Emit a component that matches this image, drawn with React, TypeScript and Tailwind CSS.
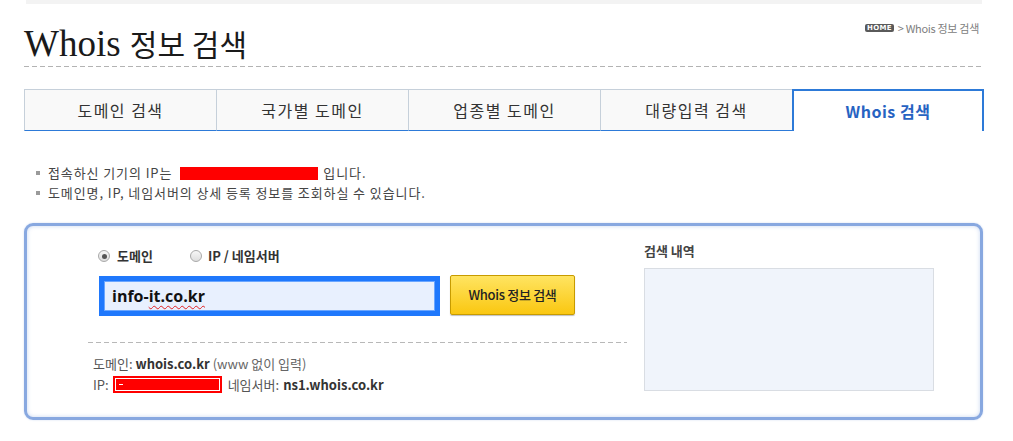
import React from 'react';

const tabs = ['도메인 검색', '국가별 도메인', '업종별 도메인', '대량입력 검색', 'Whois 검색'];

const Radio: React.FC<{ checked?: boolean }> = ({ checked }) => (
  <span className="w-[12px] h-[12px] rounded-full border border-[#a9a9a9] bg-[linear-gradient(#f7f7f7,#dedede)] flex items-center justify-center">
    {checked && <span className="w-[5px] h-[5px] rounded-full bg-[#555]" />}
  </span>
);

const App: React.FC = () => {
  return (
    <div className="w-[1013px] h-[441px] bg-white font-['Noto_Sans_CJK_KR',sans-serif] text-[#333] overflow-hidden">
      <div className="ml-[24px] w-[960px]">
        {/* top strip */}
        <div className="mx-[2px] h-[4px] bg-[#f3f3f3]" />

        {/* Header */}
        <div className="flex justify-between items-start mt-[16px] h-[40px]">
          <h1 className="h-[40px] text-[37px] leading-[40px] text-[#1a1a1a] font-normal whitespace-nowrap">
            <span className="font-['Liberation_Serif',serif]">Whois </span>
            <span className="text-[30px] leading-none font-['Noto_Sans_CJK_KR',sans-serif]">정보 검색</span>
          </h1>
          <div className="mt-[2px] mr-[5px] flex items-center h-[12px] text-[11px] text-[#808080] tracking-[-0.3px]">
            <span className="h-[8px] px-[2px] rounded-[2px] bg-[#5a5a5a] text-white text-[7px] leading-[8px] font-bold font-['DejaVu_Sans',sans-serif] tracking-[0.3px]">HOME</span>
            <span className="ml-[4px]">&gt; Whois 정보 검색</span>
          </div>
        </div>
        <div className="mt-[6px] h-px bg-[linear-gradient(to_right,#b3b3b3_5px,transparent_5px)] bg-[length:8px_1px]" />

        {/* Tabs */}
        <div className="flex h-[42px] mt-[22px]">
          {tabs.map((t, i) =>
            i === 4 ? (
              <div key={t} className="w-[192px] flex items-center justify-center bg-white border-2 border-b-0 border-[#2d7ad8] text-[16px] font-bold text-[#2763c2] tracking-[0.5px]">
                {t}
              </div>
            ) : (
              <div key={t} className="w-[192px] flex items-center justify-center bg-[#f9f9f9] border-t border-l border-[#c6d0da] border-b border-b-[#2d7ad8] text-[16px] text-[#333] tracking-[1.5px]">
                {t}
              </div>
            )
          )}
        </div>

        {/* Info */}
        <ul className="mt-[32px] pl-[12px] text-[13px] text-[#444] tracking-[0.9px]">
          <li className="flex items-center h-[20px]">
            <span className="w-[4px] h-[4px] bg-[#9a9a9a] mr-[8px]" />
            <span>접속하신 기기의 IP는</span>
            <span className="inline-block w-[138px] h-[13px] bg-[#ff0000] ml-[8px] mr-[5px]" />
            <span>입니다.</span>
          </li>
          <li className="flex items-center h-[20px]">
            <span className="w-[4px] h-[4px] bg-[#9a9a9a] mr-[8px]" />
            <span>도메인명, IP, 네임서버의 상세 등록 정보를 조회하실 수 있습니다.</span>
          </li>
        </ul>

        {/* Search box */}
        <div className="mt-[20px] w-[959px] h-[197px] border-[3px] border-[#88a8e0] rounded-[9px] flex shadow-[inset_0_0_4px_rgba(136,168,224,0.45),0_0_2px_rgba(136,168,224,0.4)]">
          <div className="ml-[61px] w-[539px] pt-[20px]">
            <div className="flex items-center h-[20px] pl-[10px] text-[13px] font-bold text-[#333]">
              <Radio checked />
              <span className="ml-[7px] mr-[37px]">도메인</span>
              <Radio />
              <span className="ml-[6px]">IP / 네임서버</span>
            </div>
            <div className="flex mt-[10px] pl-[11px] gap-[10px]">
              <div className="w-[341px] h-[40px] border-[5px] border-[#1f78fc] bg-[#e8f0fe] shadow-[inset_0_0_0_1px_#6aa6ff] flex items-center pl-[8px] text-[16px] font-bold text-[#111] font-['Open_Sans',sans-serif]">
                <span>info-</span>
                <span className="underline decoration-wavy decoration-[#e02020] decoration-1 underline-offset-[3px]">it.co.kr</span>
              </div>
              <button className="-mt-[1px] w-[125px] h-[40px] rounded-[2px] border border-[#c79b00] bg-[linear-gradient(#ffe461,#fac711)] shadow-[0_1px_1px_rgba(0,0,0,0.25)] text-[13px] text-[#222] font-medium tracking-[-0.3px]">
                Whois 정보 검색
              </button>
            </div>
            <div className="mt-[26px] h-px bg-[linear-gradient(to_right,#b8b8b8_5px,transparent_5px)] bg-[length:8px_1px]" />
            <div className="mt-[10px] pl-[5px] text-[13px] leading-[21px] text-[#555]">
              <div>
                도메인: <span className="font-bold text-[#333]">whois.co.kr</span>{' '}
                <span className="text-[#666]">(www 없이 입력)</span>
              </div>
              <div className="flex items-center">
                <span>IP:</span>
                <span className="ml-[4px] w-[109px] h-[17px] bg-[#ff0000] p-[2px] flex">
                  <span className="flex-1 border border-white flex items-center">
                    <span className="ml-[3px] w-[4px] h-px bg-white" />
                  </span>
                </span>
                <span className="ml-[6px]">네임서버:</span>
                <span className="ml-[4px] font-bold text-[#333]">ns1.whois.co.kr</span>
              </div>
            </div>
          </div>

          <div className="ml-[17px] w-[290px] pt-[17px]">
            <div className="text-[13px] leading-[16px] font-bold text-[#444]">검색 내역</div>
            <div className="mt-[9px] h-[123px] bg-[#f0f4fb] border border-[#d9dde3]" />
          </div>
        </div>
      </div>
    </div>
  );
};

export default App;
